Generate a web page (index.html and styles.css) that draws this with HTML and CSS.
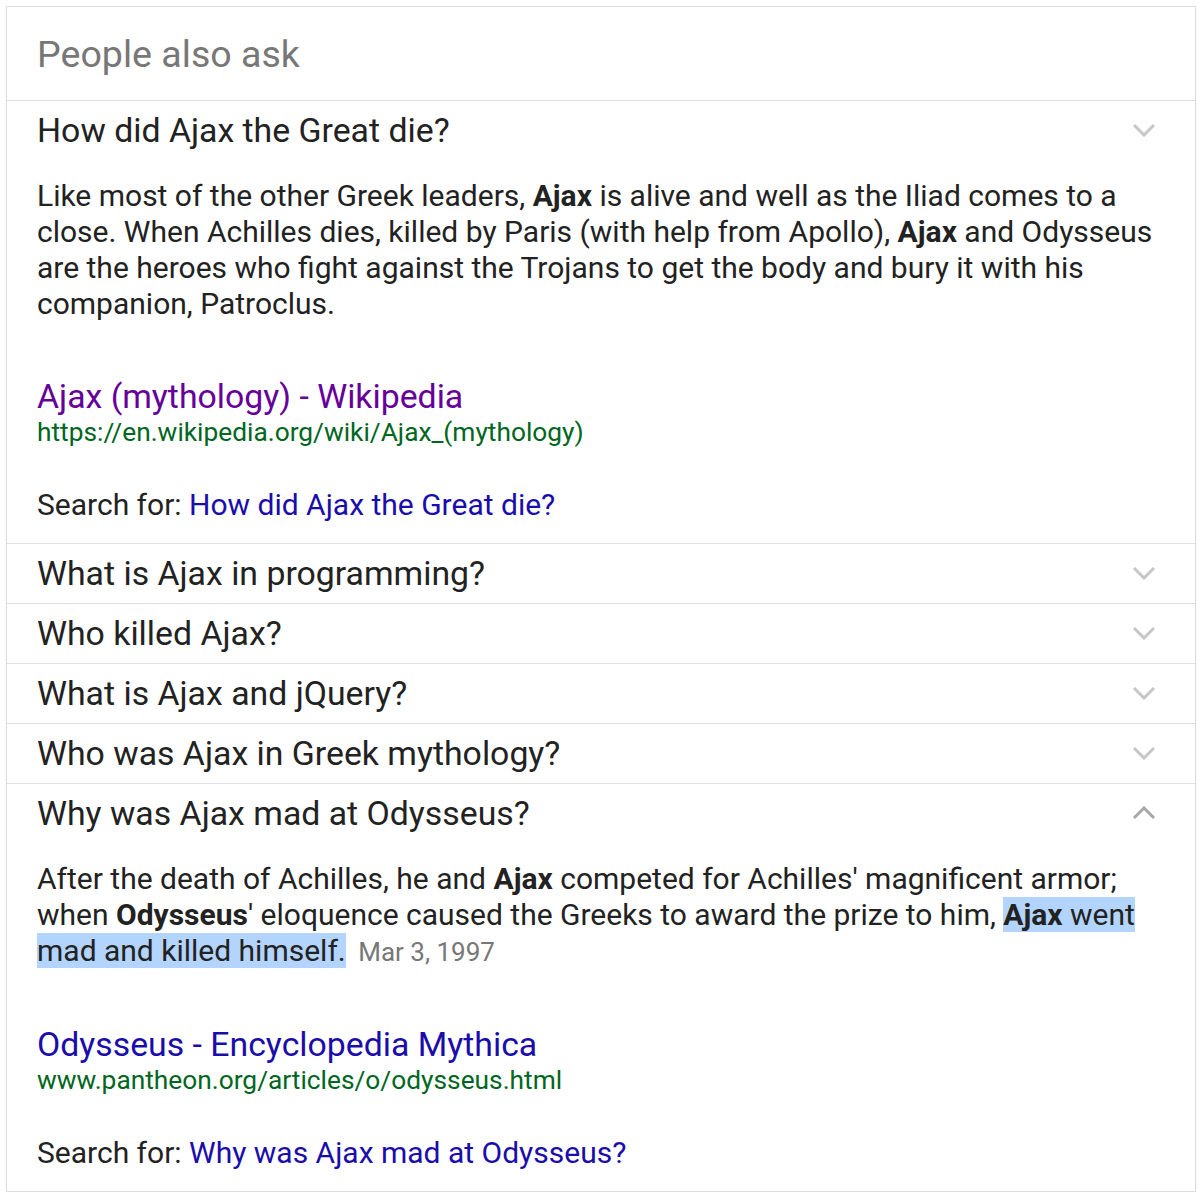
FILE: index.html
```html
<!DOCTYPE html>
<html lang="en">
<head>
<meta charset="UTF-8">
<title>People also ask</title>
<link rel="stylesheet" href="styles.css">
</head>
<body>
<div class="card">
    <div class="card-header">People also ask</div>

    <div class="question open">
        <div class="question-row">
            <span>How did Ajax the Great die?</span>
            <svg class="chevron" width="24" height="14" viewBox="0 0 24 14"><path d="M2 2 L12 12 L22 2" fill="none" stroke="currentColor" stroke-width="3"/></svg>
        </div>
        <div class="answer">
            <div class="snippet">Like most of the other Greek leaders, <b>Ajax</b> is alive and well as the Iliad comes to a close. When Achilles dies, killed by Paris (with help from Apollo), <b>Ajax</b> and Odysseus are the heroes who fight against the Trojans to get the body and bury it with his companion, Patroclus.</div>
            <div class="source">
                <a class="source-title visited" href="#">Ajax (mythology) - Wikipedia</a>
                <div class="source-url">https://en.wikipedia.org/wiki/Ajax_(mythology)</div>
            </div>
            <div class="search-for">Search for: <a href="#">How did Ajax the Great die?</a></div>
        </div>
    </div>

    <div class="question">
        <div class="question-row">
            <span>What is Ajax in programming?</span>
            <svg class="chevron" width="24" height="14" viewBox="0 0 24 14"><path d="M2 2 L12 12 L22 2" fill="none" stroke="currentColor" stroke-width="3"/></svg>
        </div>
    </div>
    <div class="question">
        <div class="question-row">
            <span>Who killed Ajax?</span>
            <svg class="chevron" width="24" height="14" viewBox="0 0 24 14"><path d="M2 2 L12 12 L22 2" fill="none" stroke="currentColor" stroke-width="3"/></svg>
        </div>
    </div>
    <div class="question">
        <div class="question-row">
            <span>What is Ajax and jQuery?</span>
            <svg class="chevron" width="24" height="14" viewBox="0 0 24 14"><path d="M2 2 L12 12 L22 2" fill="none" stroke="currentColor" stroke-width="3"/></svg>
        </div>
    </div>
    <div class="question">
        <div class="question-row">
            <span>Who was Ajax in Greek mythology?</span>
            <svg class="chevron" width="24" height="14" viewBox="0 0 24 14"><path d="M2 2 L12 12 L22 2" fill="none" stroke="currentColor" stroke-width="3"/></svg>
        </div>
    </div>

    <div class="question open last">
        <div class="question-row">
            <span>Why was Ajax mad at Odysseus?</span>
            <svg class="chevron up" width="24" height="14" viewBox="0 0 24 14"><path d="M2 12 L12 2 L22 12" fill="none" stroke="currentColor" stroke-width="3"/></svg>
        </div>
        <div class="answer">
            <div class="snippet">After the death of Achilles, he and <b>Ajax</b> competed for Achilles' magnificent armor; when <b>Odysseus</b>' eloquence caused the Greeks to award the prize to him, <span class="selected"><b>Ajax</b> went mad and killed himself.</span> <span class="date">Mar 3, 1997</span></div>
            <div class="source">
                <a class="source-title" href="#">Odysseus - Encyclopedia Mythica</a>
                <div class="source-url">www.pantheon.org/articles/o/odysseus.html</div>
            </div>
            <div class="search-for">Search for: <a href="#">Why was Ajax mad at Odysseus?</a></div>
        </div>
    </div>
</div>
</body>
</html>
```

FILE: styles.css
```css
body {
    margin: 0;
    padding: 0;
    background: #fff;
    font-family: Roboto, Arial, sans-serif;
    color: #222;
}
.card {
    margin: 6px 0 0 6px;
    width: 1188px;
    border: 1px solid #dedede;
    box-shadow: 0 1px 2px rgba(0, 0, 0, 0.08);
}
.card-header {
    height: 93px;
    padding: 0 30px;
    display: flex;
    align-items: center;
    font-size: 37.6px;
    color: #777;
    border-bottom: 1px solid #e0e0e0;
}
.question {
    border-bottom: 1px solid #e0e0e0;
}
.question.last {
    border-bottom: none;
}
.question-row {
    height: 59px;
    padding: 0 39px 0 30px;
    display: flex;
    align-items: center;
    justify-content: space-between;
    font-size: 33.8px;
    color: #222;
}
.chevron {
    color: #c6c6c6;
    margin-top: -2px;
}
.chevron.up {
    color: #a8a8a8;
}
.answer {
    padding: 18px 32px 20px 30px;
}
.snippet {
    font-size: 30px;
    line-height: 36px;
    color: #222;
}
.snippet b {
    font-weight: bold;
}
.selected {
    background: #b3d4fc;
}
.date {
    font-size: 26px;
    color: #777;
    margin-left: 5px;
}
.source {
    margin-top: 57px;
}
.source-title {
    display: block;
    font-size: 33.8px;
    line-height: 36px;
    color: #1a0dab;
    text-decoration: none;
}
.source-title.visited {
    color: #660099;
}
.source-url {
    font-size: 26.3px;
    line-height: 34px;
    color: #006621;
}
.search-for {
    margin-top: 38px;
    font-size: 30px;
    line-height: 36px;
    color: #222;
}
.search-for a {
    color: #1a0dab;
    text-decoration: none;
}
```
